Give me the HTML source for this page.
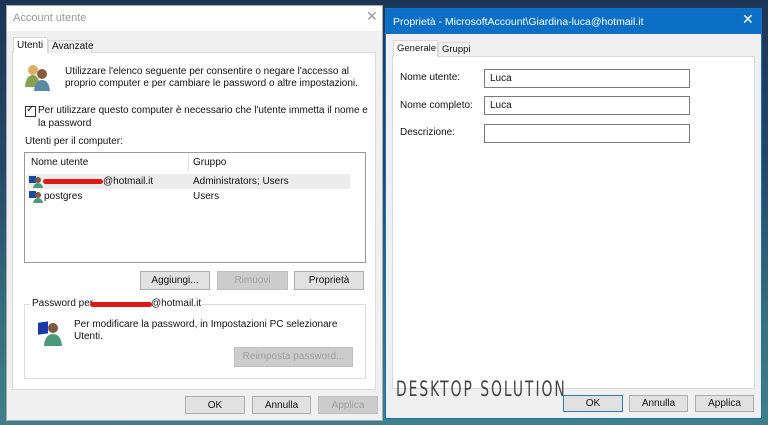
<!DOCTYPE html>
<html><head><meta charset="utf-8"><style>
*{margin:0;padding:0;box-sizing:border-box}
body{width:768px;height:425px;overflow:hidden;position:relative;font-family:"Liberation Sans",sans-serif;font-size:10px;color:#111;background:linear-gradient(180deg,#1c3556 0%,#24486a 40%,#35707e 75%,#3f8088 100%)}
.a{position:absolute}
.t{position:absolute;white-space:nowrap;line-height:12px}
.btn{position:absolute;background:#e1e1e1;border:1px solid #adadad;text-align:center;line-height:17px;font-size:10px}
.dis{color:#a0a0a0;background:#cccccc;border-color:#bfbfbf}
.inp{position:absolute;background:#fff;border:1px solid #7a7a7a;padding-left:5px;line-height:17px}
</style></head><body>
<!-- left window -->
<div class="a" style="left:6px;top:5px;width:377px;height:416px;background:#f0f0f0;border:1px solid #aaa"></div>
<div class="a" style="left:7px;top:6px;width:375px;height:25px;background:#fff"></div>
<div class="t" style="left:13px;top:12px;color:#999;font-size:11px">Account utente</div>
<div class="t" style="left:366px;top:10px;color:#999;font-size:14px">✕</div>
<div class="a" style="left:12px;top:52px;width:364px;height:338px;background:#fff;border:1px solid #d9d9d9"></div>
<div class="a" style="left:13px;top:37px;width:35px;height:16px;background:#fff;border:1px solid #d9d9d9;border-bottom:none"></div>
<div class="t" style="left:17px;top:40px">Utenti</div>
<div class="a" style="left:48px;top:40px;width:44px;height:13px;background:#f0f0f0;border:1px solid #d9d9d9;border-bottom:none"></div>
<div class="t" style="left:52px;top:41px">Avanzate</div>
<svg class="a" style="left:24px;top:63px" width="28" height="28"><circle cx="9" cy="7" r="5" fill="#d8b060"/><path d="M1 24 Q2 12 9 12 Q15 12 16 24Z" fill="#8aa050"/><circle cx="18" cy="11" r="5" fill="#8a5a3a"/><path d="M10 28 Q11 17 18 17 Q25 17 26 28Z" fill="#5a8aa8"/></svg>
<div class="t" style="left:65px;top:66px">Utilizzare l'elenco seguente per consentire o negare l'accesso al</div>
<div class="t" style="left:65px;top:78px">proprio computer e per cambiare le password o altre impostazioni.</div>
<div class="a" style="left:25px;top:106px;width:11px;height:11px;border:1px solid #333;background:#fff"></div>
<div class="t" style="left:26px;top:104px;font-size:10px">✓</div>
<div class="t" style="left:38px;top:105px">Per utilizzare questo computer è necessario che l'utente immetta il nome e</div>
<div class="t" style="left:38px;top:118px">la password</div>
<div class="t" style="left:25px;top:136px">Utenti per il computer:</div>
<div class="a" style="left:24px;top:152px;width:342px;height:111px;border:1px solid #999;background:#fff"></div>
<div class="a" style="left:188px;top:153px;width:1px;height:19px;background:#e5e5e5"></div>
<div class="t" style="left:31px;top:157px">Nome utente</div>
<div class="t" style="left:193px;top:157px">Gruppo</div>
<div class="a" style="left:28px;top:174px;width:322px;height:15px;background:#ececec"></div>
<svg class="a" style="left:29px;top:175px" width="14" height="13"><rect x="0" y="1" width="7" height="7" fill="#1a4aa0"/><circle cx="9" cy="5" r="3" fill="#7a5a40"/><path d="M4 13 Q5 8 9 8 Q13 8 14 13Z" fill="#4a9a7a"/></svg>
<div class="a" style="left:43px;top:179px;width:60px;height:5px;border-radius:3px;background:#e01818"></div>
<div class="t" style="left:103px;top:176px">@hotmail.it</div>
<div class="t" style="left:193px;top:176px">Administrators; Users</div>
<svg class="a" style="left:29px;top:190px" width="14" height="13"><rect x="0" y="1" width="7" height="7" fill="#1a4aa0"/><circle cx="9" cy="5" r="3" fill="#7a5a40"/><path d="M4 13 Q5 8 9 8 Q13 8 14 13Z" fill="#4a9a7a"/></svg>
<div class="t" style="left:44px;top:191px">postgres</div>
<div class="t" style="left:193px;top:191px">Users</div>
<div class="btn" style="left:140px;top:271px;width:70px;height:19px">Aggiungi...</div>
<div class="btn dis" style="left:217px;top:271px;width:71px;height:19px">Rimuovi</div>
<div class="btn" style="left:294px;top:271px;width:70px;height:19px">Proprietà</div>
<div class="a" style="left:24px;top:304px;width:342px;height:75px;border:1px solid #dcdcdc"></div>
<div class="a" style="left:30px;top:298px;width:172px;height:12px;background:#fff"></div>
<div class="t" style="left:32px;top:298px">Password per</div>
<div class="a" style="left:90px;top:302px;width:62px;height:5px;border-radius:3px;background:#e01818"></div>
<div class="t" style="left:151px;top:298px">@hotmail.it</div>
<svg class="a" style="left:36px;top:320px" width="28" height="26"><rect x="2" y="3" width="10" height="12" fill="#1a3aa8" transform="skewY(-8)"/><circle cx="17" cy="8" r="5" fill="#7a5a40"/><path d="M8 26 Q9 14 17 14 Q25 14 26 26Z" fill="#4a9a7a"/></svg>
<div class="t" style="left:74px;top:319px">Per modificare la password, in Impostazioni PC selezionare</div>
<div class="t" style="left:74px;top:331px">Utenti.</div>
<div class="btn dis" style="left:234px;top:347px;width:119px;height:20px">Reimposta password...</div>
<div class="btn" style="left:185px;top:396px;width:60px;height:18px">OK</div>
<div class="btn" style="left:252px;top:396px;width:59px;height:18px">Annulla</div>
<div class="btn dis" style="left:318px;top:396px;width:60px;height:18px">Applica</div>
<!-- right window -->
<div class="a" style="left:385px;top:8px;width:377px;height:411px;background:#f0f0f0;border:1px solid #1670c8"></div>
<div class="a" style="left:386px;top:9px;width:375px;height:25px;background:#0b6fc6"></div>
<div class="t" style="left:393px;top:16px;color:#fff;font-size:10.5px">Proprietà - MicrosoftAccount\Giardina-luca@hotmail.it</div>
<div class="t" style="left:742px;top:13px;color:#fff;font-size:14px">✕</div>
<div class="a" style="left:392px;top:56px;width:363px;height:333px;background:#fff;border:1px solid #d9d9d9"></div>
<div class="a" style="left:393px;top:40px;width:45px;height:17px;background:#fff;border:1px solid #d9d9d9;border-bottom:none"></div>
<div class="t" style="left:397px;top:43px;font-size:9.5px">Generale</div>
<div class="a" style="left:438px;top:42px;width:32px;height:14px;background:#f0f0f0;border:1px solid #d9d9d9;border-bottom:none"></div>
<div class="t" style="left:442px;top:44px;font-size:9.5px">Gruppi</div>
<div class="t" style="left:400px;top:72px">Nome utente:</div>
<div class="t" style="left:400px;top:100px">Nome completo:</div>
<div class="t" style="left:400px;top:127px">Descrizione:</div>
<div class="inp" style="left:484px;top:69px;width:206px;height:19px">Luca</div>
<div class="inp" style="left:484px;top:96px;width:206px;height:19px">Luca</div>
<div class="inp" style="left:484px;top:124px;width:206px;height:19px"></div>
<div class="t" style="left:396px;top:379px;font-size:21px;line-height:20px;letter-spacing:3px;color:#444;font-family:'DejaVu Sans',sans-serif;font-weight:normal;transform:scaleX(0.66);transform-origin:left">DESKTOP SOLUTION</div>
<div class="btn" style="left:563px;top:395px;width:60px;height:17px;border:1px solid #2a7ad0;line-height:15px">OK</div>
<div class="btn" style="left:629px;top:395px;width:59px;height:17px;line-height:15px">Annulla</div>
<div class="btn" style="left:695px;top:395px;width:59px;height:17px;line-height:15px">Applica</div>
</body></html>
